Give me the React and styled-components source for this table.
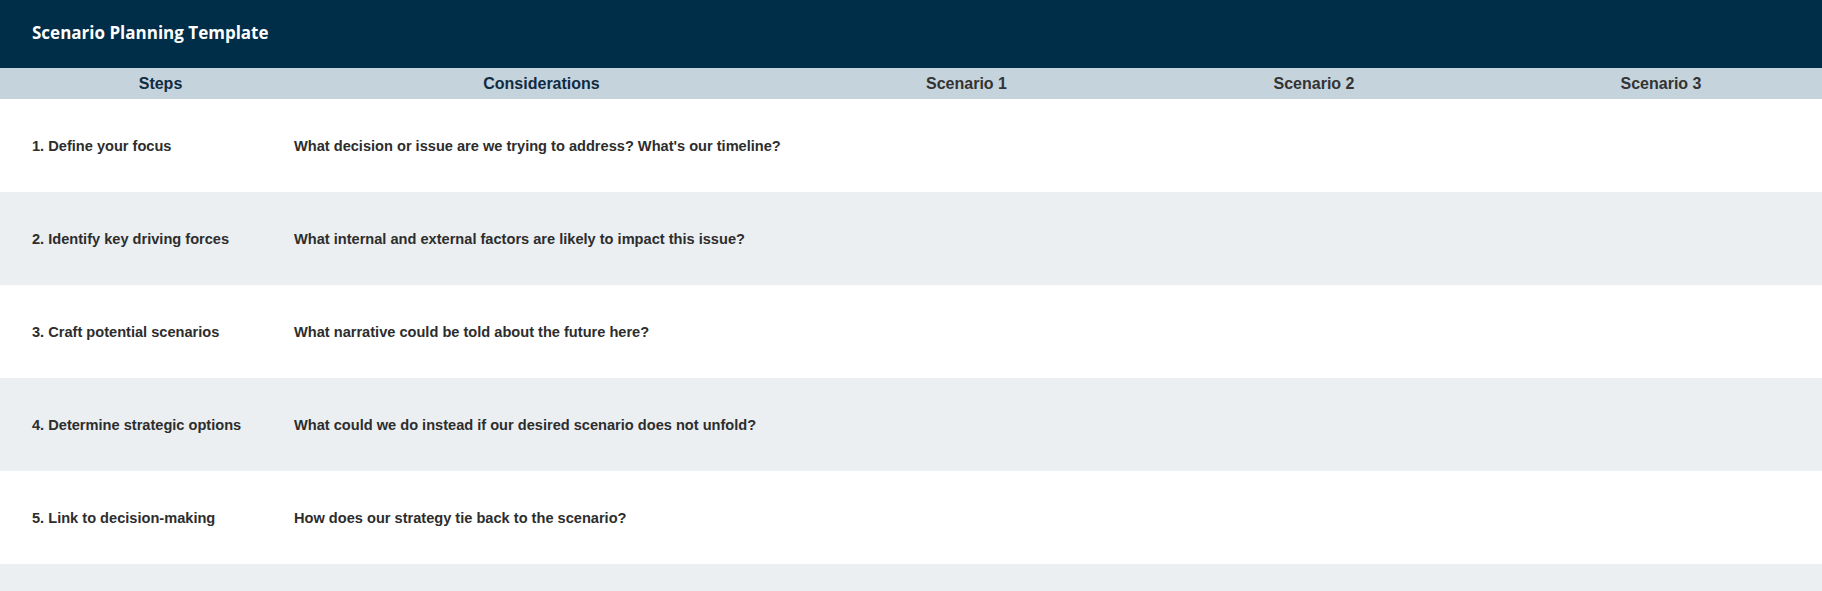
import React from "react";
import styled, { createGlobalStyle } from "styled-components";

const GlobalStyle = createGlobalStyle`
  html, body {
    margin: 0;
    padding: 0;
    background: #ffffff;
  }
  body {
    font-family: "Liberation Sans", Arial, sans-serif;
  }
`;

const Page = styled.div`
  width: 100%;
  height: 591px;
  overflow: hidden;
  background: #ffffff;
`;

const TitleBar = styled.div`
  height: 68px;
  background: #002d47;
  display: flex;
  align-items: center;
  padding: 0 0 4px 32px;
  box-sizing: border-box;
`;

const Title = styled.h1`
  margin: 0;
  font-family: "Open Sans", "Noto Sans", sans-serif;
  font-weight: 700;
  font-size: 17px;
  color: #ffffff;
`;

const Grid = styled.div`
  display: grid;
  grid-template-columns: 278px 527px 323px 372px 1fr;
`;

const HeadRow = styled(Grid)`
  height: 31px;
  background: #c5d3dc;
  align-items: center;
`;

const HeadCell = styled.div`
  text-align: center;
  font-size: 16px;
  font-weight: 700;
  color: ${(p) => (p.$muted ? "#333333" : "#0f2c43")};
  padding-left: ${(p) => (p.$first ? "43px" : "0")};
`;

const Row = styled(Grid)`
  height: 93px;
  align-items: center;
  background: ${(p) => (p.$alt ? "#ebeff2" : "#ffffff")};
`;

const Cell = styled.div`
  font-size: 14.6px;
  font-weight: 700;
  color: #2d2d2d;
  padding-left: ${(p) => (p.$first ? "32px" : "16px")};
`;

const steps = [
  ["1. Define your focus", "What decision or issue are we trying to address? What's our timeline?"],
  ["2. Identify key driving forces", "What internal and external factors are likely to impact this issue?"],
  ["3. Craft potential scenarios", "What narrative could be told about the future here?"],
  ["4. Determine strategic options", "What could we do instead if our desired scenario does not unfold?"],
  ["5. Link to decision-making", "How does our strategy tie back to the scenario?"],
  ["", ""],
];

export default function App() {
  return (
    <Page>
      <GlobalStyle />
      <TitleBar>
        <Title>Scenario Planning Template</Title>
      </TitleBar>
      <HeadRow>
        <HeadCell $first>Steps</HeadCell>
        <HeadCell>Considerations</HeadCell>
        <HeadCell $muted>Scenario 1</HeadCell>
        <HeadCell $muted>Scenario 2</HeadCell>
        <HeadCell $muted>Scenario 3</HeadCell>
      </HeadRow>
      {steps.map(([step, question], i) => (
        <Row key={i} $alt={i % 2 === 1}>
          <Cell $first>{step}</Cell>
          <Cell>{question}</Cell>
          <Cell />
          <Cell />
          <Cell />
        </Row>
      ))}
    </Page>
  );
}
